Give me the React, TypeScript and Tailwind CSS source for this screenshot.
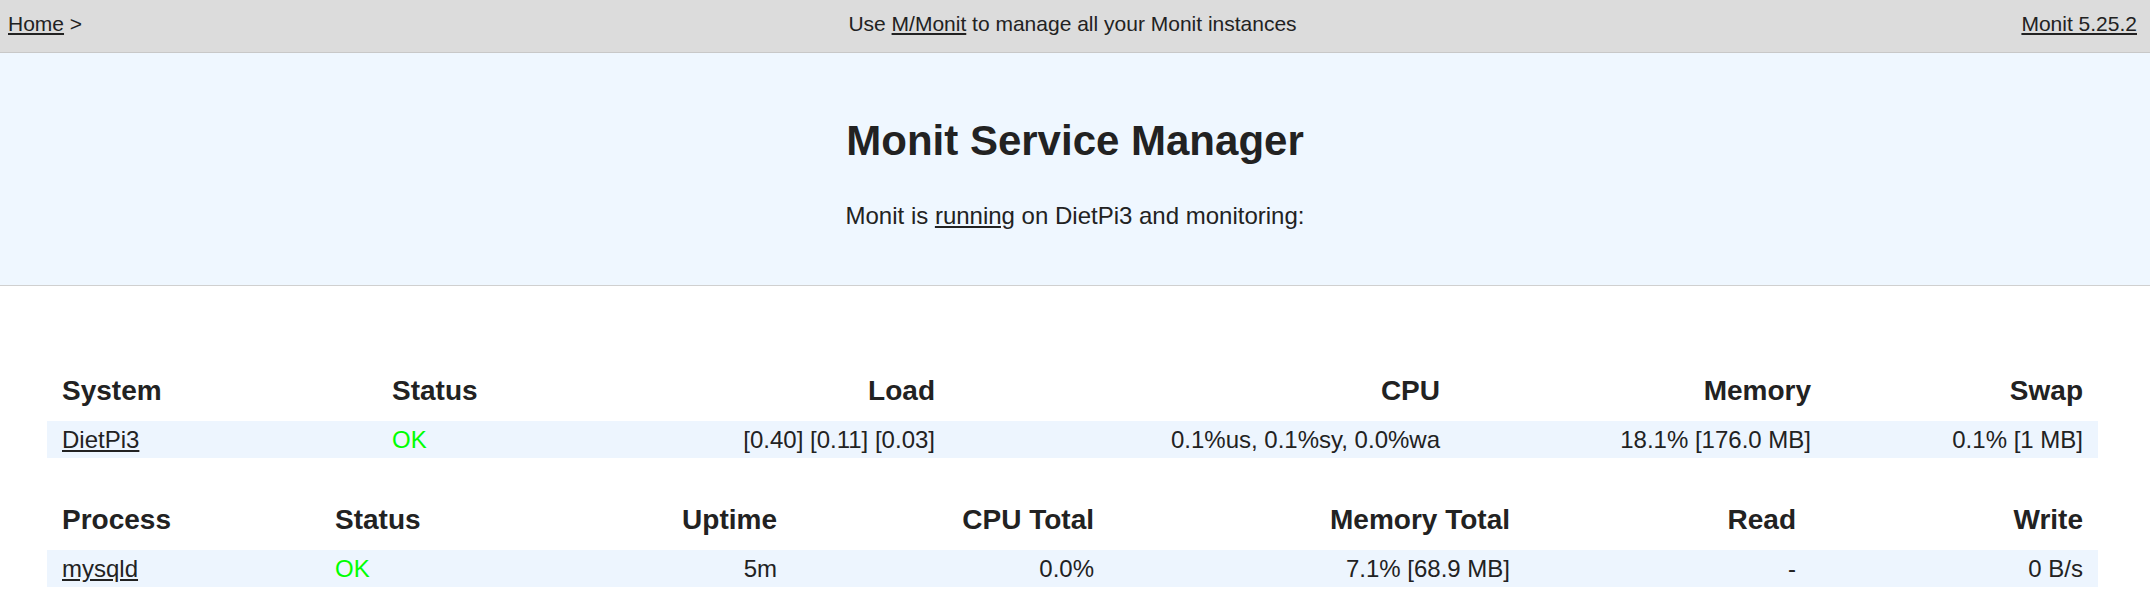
type Cell = { text: string; align: 'left' | 'right'; kind?: 'link' | 'ok' };

const systemCols = 'grid-cols-[330px_223px_350px_505px_371px_272px]';
const processCols = 'grid-cols-[273px_280px_192px_317px_416px_286px_287px]';

const systemHead: Cell[] = [
  { text: 'System', align: 'left' },
  { text: 'Status', align: 'left' },
  { text: 'Load', align: 'right' },
  { text: 'CPU', align: 'right' },
  { text: 'Memory', align: 'right' },
  { text: 'Swap', align: 'right' },
];

const systemRow: Cell[] = [
  { text: 'DietPi3', align: 'left', kind: 'link' },
  { text: 'OK', align: 'left', kind: 'ok' },
  { text: '[0.40] [0.11] [0.03]', align: 'right' },
  { text: '0.1%us, 0.1%sy, 0.0%wa', align: 'right' },
  { text: '18.1% [176.0 MB]', align: 'right' },
  { text: '0.1% [1 MB]', align: 'right' },
];

const processHead: Cell[] = [
  { text: 'Process', align: 'left' },
  { text: 'Status', align: 'left' },
  { text: 'Uptime', align: 'right' },
  { text: 'CPU Total', align: 'right' },
  { text: 'Memory Total', align: 'right' },
  { text: 'Read', align: 'right' },
  { text: 'Write', align: 'right' },
];

const processRow: Cell[] = [
  { text: 'mysqld', align: 'left', kind: 'link' },
  { text: 'OK', align: 'left', kind: 'ok' },
  { text: '5m', align: 'right' },
  { text: '0.0%', align: 'right' },
  { text: '7.1% [68.9 MB]', align: 'right' },
  { text: '-', align: 'right' },
  { text: '0 B/s', align: 'right' },
];

function ServiceTable({ cols, head, row }: { cols: string; head: Cell[]; row: Cell[] }) {
  return (
    <div className="w-[2051px] ml-[47px]">
      <div className={`grid ${cols} pb-[14px]`}>
        {head.map((c) => (
          <div
            key={c.text}
            className={`px-[15px] text-[28px] leading-[32px] font-bold ${c.align === 'right' ? 'text-right' : 'text-left'}`}
          >
            {c.text}
          </div>
        ))}
      </div>
      <div className={`grid ${cols} bg-[#edf5fe] h-[37px]`}>
        {row.map((c, i) => (
          <div
            key={i}
            className={`px-[15px] text-[24px] leading-[37px] ${c.align === 'right' ? 'text-right' : 'text-left'}`}
          >
            {c.kind === 'link' ? (
              <a href="#" className="underline">{c.text}</a>
            ) : c.kind === 'ok' ? (
              <span className="text-[#00ff00]">{c.text}</span>
            ) : (
              c.text
            )}
          </div>
        ))}
      </div>
    </div>
  );
}

export default function App() {
  return (
    <div className="min-h-screen bg-white text-[#222] font-['Liberation_Sans',Arial,sans-serif]">
      <header className="h-[53px] bg-[#dcdcdc] border-b border-[#c8c8c8] pl-[8px] pr-[13px] pt-[12px] flex justify-between text-[21px] leading-[24px]">
        <div className="w-[400px]">
          <a href="#" className="underline">Home</a> &gt;
        </div>
        <div className="text-center">
          Use <a href="#" className="underline">M/Monit</a> to manage all your Monit instances
        </div>
        <div className="w-[400px] text-right">
          <a href="#" className="underline">Monit 5.25.2</a>
        </div>
      </header>

      <section className="bg-[#eff7ff] border-b border-[#d0d0d0] pt-[64px] pb-[55px] text-center">
        <h1 className="text-[42px] leading-[48px] font-bold">Monit Service Manager</h1>
        <p className="mt-[37px] text-[24px] leading-[28px]">
          Monit is <a href="#" className="underline">running</a> on DietPi3 and monitoring:
        </p>
      </section>

      <main className="pt-[89px] pb-[30px]">
        <ServiceTable cols={systemCols} head={systemHead} row={systemRow} />
        <div className="mt-[46px]">
          <ServiceTable cols={processCols} head={processHead} row={processRow} />
        </div>
      </main>
    </div>
  );
}
